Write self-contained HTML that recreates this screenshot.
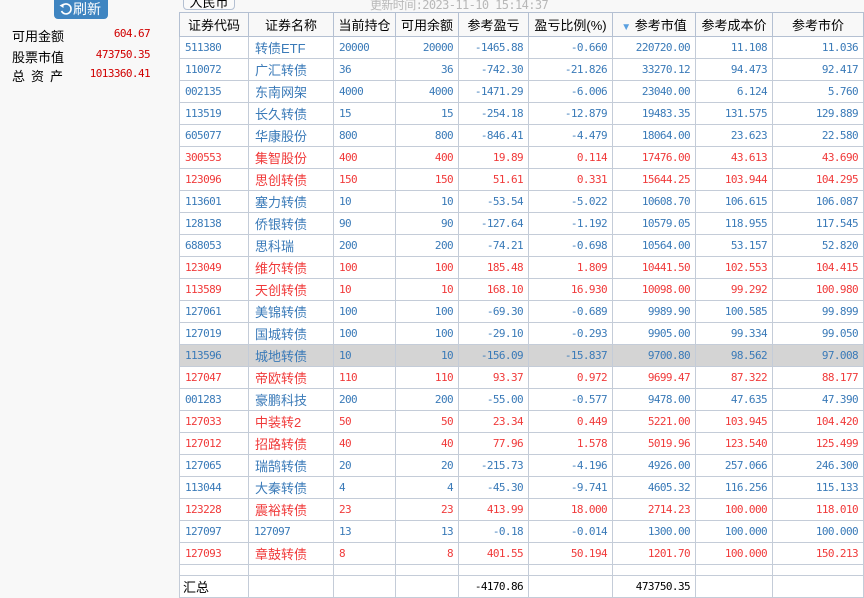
<!DOCTYPE html>
<html><head><meta charset="utf-8"><style>
*{margin:0;padding:0;box-sizing:border-box}
body{width:864px;height:596px;overflow:hidden;background:#f8f8f8;font-family:"Liberation Sans","Noto Sans CJK SC",sans-serif;position:relative}
.btn{position:absolute;left:54px;top:0;width:54px;height:19px;background:#3f85c1;border-radius:0 0 4px 4px;color:#fff;font-size:14px;line-height:19px;padding-left:5px}
.btn svg{vertical-align:-2px}
.lbl{position:absolute;left:12px;font-size:13px;color:#000}
.val{position:absolute;right:714px;font-family:"DejaVu Sans Mono",monospace;font-size:11px;letter-spacing:-0.6px;color:#d00000}
.tab{position:absolute;left:183px;top:-6px;width:52px;height:16px;border:1px solid #b4c0d2;border-radius:4px;background:#fafafa;font-size:13px;text-align:center;line-height:16px;color:#000}
.time{position:absolute;left:370px;top:-4px;font-size:12px;color:#b8b8b8;font-family:"DejaVu Sans Mono","Noto Sans CJK SC",monospace;letter-spacing:-0.6px}
table{position:absolute;left:179px;top:12px;border-collapse:collapse;background:#fff;table-layout:fixed}
td,th{border:1px solid #c4ccd8;height:22px;font-weight:normal;white-space:nowrap;overflow:hidden}
th{background:#f8f8f8;font-size:13px;height:24px;border-color:#b4c0d2;text-align:center;color:#000}
td{font-family:"DejaVu Sans Mono","Noto Sans CJK SC",monospace;font-size:11px;letter-spacing:-0.6px;padding:0 5px;text-align:right}
td.l{text-align:left}
td.n{font-family:"Liberation Sans","Noto Sans CJK SC",sans-serif;font-size:13px;letter-spacing:0;padding-left:6px}
tr.b td{color:#3a7ab8}
tr.r td{color:#f03a3a}
tr.g td{background:#d4d4d4}
tr.e td{height:11px}
tr.t td{color:#000}
</style></head><body>
<div class="btn"><svg width="14" height="14" viewBox="0 0 14 14"><path d="M3 4 A5 5 0 1 1 2.5 9" fill="none" stroke="#fff" stroke-width="1.6"/><path d="M0.5 3.5 L4.5 1.5 L4.5 6 Z" fill="#fff"/></svg>刷新</div>
<div class="lbl" style="top:26px">可用金额</div><div class="val" style="top:27px">604.67</div>
<div class="lbl" style="top:47px">股票市值</div><div class="val" style="top:48px">473750.35</div>
<div class="lbl" style="top:66px;letter-spacing:6px">总资产</div><div class="val" style="top:67px">1013360.41</div>
<div class="tab">人民币</div>
<div class="time">更新时间:2023-11-10 15:14:37</div>
<table>
<colgroup><col style="width:69px"><col style="width:85px"><col style="width:62px"><col style="width:63px"><col style="width:70px"><col style="width:84px"><col style="width:83px"><col style="width:77px"><col style="width:91px"></colgroup>
<tr><th>证券代码</th><th>证券名称</th><th>当前持仓</th><th>可用余额</th><th>参考盈亏</th><th>盈亏比例(%)</th><th><span style="color:#5aa0e0;font-size:10px">▼</span> 参考市值</th><th>参考成本价</th><th>参考市价</th></tr>
<tr class="b"><td class="l">511380</td><td class="l n">转债ETF</td><td class="l">20000</td><td>20000</td><td>-1465.88</td><td>-0.660</td><td>220720.00</td><td>11.108</td><td>11.036</td></tr>
<tr class="b"><td class="l">110072</td><td class="l n">广汇转债</td><td class="l">36</td><td>36</td><td>-742.30</td><td>-21.826</td><td>33270.12</td><td>94.473</td><td>92.417</td></tr>
<tr class="b"><td class="l">002135</td><td class="l n">东南网架</td><td class="l">4000</td><td>4000</td><td>-1471.29</td><td>-6.006</td><td>23040.00</td><td>6.124</td><td>5.760</td></tr>
<tr class="b"><td class="l">113519</td><td class="l n">长久转债</td><td class="l">15</td><td>15</td><td>-254.18</td><td>-12.879</td><td>19483.35</td><td>131.575</td><td>129.889</td></tr>
<tr class="b"><td class="l">605077</td><td class="l n">华康股份</td><td class="l">800</td><td>800</td><td>-846.41</td><td>-4.479</td><td>18064.00</td><td>23.623</td><td>22.580</td></tr>
<tr class="r"><td class="l">300553</td><td class="l n">集智股份</td><td class="l">400</td><td>400</td><td>19.89</td><td>0.114</td><td>17476.00</td><td>43.613</td><td>43.690</td></tr>
<tr class="r"><td class="l">123096</td><td class="l n">思创转债</td><td class="l">150</td><td>150</td><td>51.61</td><td>0.331</td><td>15644.25</td><td>103.944</td><td>104.295</td></tr>
<tr class="b"><td class="l">113601</td><td class="l n">塞力转债</td><td class="l">10</td><td>10</td><td>-53.54</td><td>-5.022</td><td>10608.70</td><td>106.615</td><td>106.087</td></tr>
<tr class="b"><td class="l">128138</td><td class="l n">侨银转债</td><td class="l">90</td><td>90</td><td>-127.64</td><td>-1.192</td><td>10579.05</td><td>118.955</td><td>117.545</td></tr>
<tr class="b"><td class="l">688053</td><td class="l n">思科瑞</td><td class="l">200</td><td>200</td><td>-74.21</td><td>-0.698</td><td>10564.00</td><td>53.157</td><td>52.820</td></tr>
<tr class="r"><td class="l">123049</td><td class="l n">维尔转债</td><td class="l">100</td><td>100</td><td>185.48</td><td>1.809</td><td>10441.50</td><td>102.553</td><td>104.415</td></tr>
<tr class="r"><td class="l">113589</td><td class="l n">天创转债</td><td class="l">10</td><td>10</td><td>168.10</td><td>16.930</td><td>10098.00</td><td>99.292</td><td>100.980</td></tr>
<tr class="b"><td class="l">127061</td><td class="l n">美锦转债</td><td class="l">100</td><td>100</td><td>-69.30</td><td>-0.689</td><td>9989.90</td><td>100.585</td><td>99.899</td></tr>
<tr class="b"><td class="l">127019</td><td class="l n">国城转债</td><td class="l">100</td><td>100</td><td>-29.10</td><td>-0.293</td><td>9905.00</td><td>99.334</td><td>99.050</td></tr>
<tr class="b g"><td class="l">113596</td><td class="l n">城地转债</td><td class="l">10</td><td>10</td><td>-156.09</td><td>-15.837</td><td>9700.80</td><td>98.562</td><td>97.008</td></tr>
<tr class="r"><td class="l">127047</td><td class="l n">帝欧转债</td><td class="l">110</td><td>110</td><td>93.37</td><td>0.972</td><td>9699.47</td><td>87.322</td><td>88.177</td></tr>
<tr class="b"><td class="l">001283</td><td class="l n">豪鹏科技</td><td class="l">200</td><td>200</td><td>-55.00</td><td>-0.577</td><td>9478.00</td><td>47.635</td><td>47.390</td></tr>
<tr class="r"><td class="l">127033</td><td class="l n">中装转2</td><td class="l">50</td><td>50</td><td>23.34</td><td>0.449</td><td>5221.00</td><td>103.945</td><td>104.420</td></tr>
<tr class="r"><td class="l">127012</td><td class="l n">招路转债</td><td class="l">40</td><td>40</td><td>77.96</td><td>1.578</td><td>5019.96</td><td>123.540</td><td>125.499</td></tr>
<tr class="b"><td class="l">127065</td><td class="l n">瑞鹄转债</td><td class="l">20</td><td>20</td><td>-215.73</td><td>-4.196</td><td>4926.00</td><td>257.066</td><td>246.300</td></tr>
<tr class="b"><td class="l">113044</td><td class="l n">大秦转债</td><td class="l">4</td><td>4</td><td>-45.30</td><td>-9.741</td><td>4605.32</td><td>116.256</td><td>115.133</td></tr>
<tr class="r"><td class="l">123228</td><td class="l n">震裕转债</td><td class="l">23</td><td>23</td><td>413.99</td><td>18.000</td><td>2714.23</td><td>100.000</td><td>118.010</td></tr>
<tr class="b"><td class="l">127097</td><td class="l">127097</td><td class="l">13</td><td>13</td><td>-0.18</td><td>-0.014</td><td>1300.00</td><td>100.000</td><td>100.000</td></tr>
<tr class="r"><td class="l">127093</td><td class="l n">章鼓转债</td><td class="l">8</td><td>8</td><td>401.55</td><td>50.194</td><td>1201.70</td><td>100.000</td><td>150.213</td></tr>
<tr class="e"><td></td><td></td><td></td><td></td><td></td><td></td><td></td><td></td><td></td></tr>
<tr class="t"><td class="l n" style="padding-left:3px">汇总</td><td></td><td></td><td></td><td>-4170.86</td><td></td><td>473750.35</td><td></td><td></td></tr>
</table>
</body></html>
